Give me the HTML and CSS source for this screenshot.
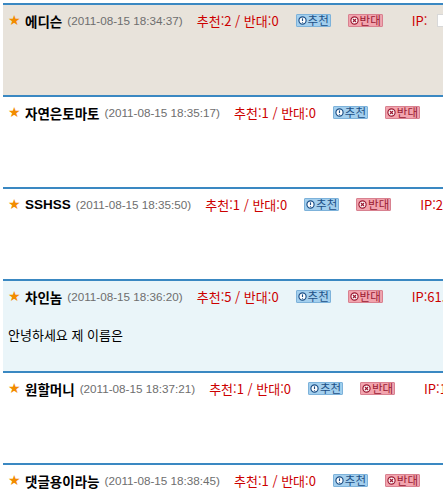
FILE: index.html
```html
<!DOCTYPE html>
<html lang="ko">
<head>
    <meta charset="utf-8">
    <title>댓글</title>
    <link rel="stylesheet" href="styles.css">
</head>
<body>
    <div class="comment-list">
        <div class="comment mine">
            <div class="comment-head">
                <span class="star">★</span>
                <span class="nick">에디슨</span>
                <span class="date">(2011-08-15 18:34:37)</span>
                <span class="votes">추천:2 / 반대:0</span>
                <span class="btn btn-up"><svg viewBox="0 0 10 10"><circle cx="5" cy="5" r="4" /><line x1="5" y1="2.6" x2="5" y2="5.6" /><line x1="5" y1="6.8" x2="5" y2="7.6" /></svg>추천</span>
                <span class="btn btn-down"><svg viewBox="0 0 10 10"><circle cx="5" cy="5" r="4" /><line x1="3.3" y1="3.3" x2="6.7" y2="6.7" /><line x1="6.7" y1="3.3" x2="3.3" y2="6.7" /></svg>반대</span>
                <span class="ip">IP: <span class="ip-box"></span></span>
            </div>
        </div>
        <div class="comment">
            <div class="comment-head">
                <span class="star">★</span>
                <span class="nick">자연은토마토</span>
                <span class="date">(2011-08-15 18:35:17)</span>
                <span class="votes">추천:1 / 반대:0</span>
                <span class="btn btn-up"><svg viewBox="0 0 10 10"><circle cx="5" cy="5" r="4" /><line x1="5" y1="2.6" x2="5" y2="5.6" /><line x1="5" y1="6.8" x2="5" y2="7.6" /></svg>추천</span>
                <span class="btn btn-down"><svg viewBox="0 0 10 10"><circle cx="5" cy="5" r="4" /><line x1="3.3" y1="3.3" x2="6.7" y2="6.7" /><line x1="6.7" y1="3.3" x2="3.3" y2="6.7" /></svg>반대</span>
                <span class="ip">IP:125.186.xxx.xxx</span>
            </div>
        </div>
        <div class="comment">
            <div class="comment-head">
                <span class="star">★</span>
                <span class="nick">SSHSS</span>
                <span class="date">(2011-08-15 18:35:50)</span>
                <span class="votes">추천:1 / 반대:0</span>
                <span class="btn btn-up"><svg viewBox="0 0 10 10"><circle cx="5" cy="5" r="4" /><line x1="5" y1="2.6" x2="5" y2="5.6" /><line x1="5" y1="6.8" x2="5" y2="7.6" /></svg>추천</span>
                <span class="btn btn-down"><svg viewBox="0 0 10 10"><circle cx="5" cy="5" r="4" /><line x1="3.3" y1="3.3" x2="6.7" y2="6.7" /><line x1="6.7" y1="3.3" x2="3.3" y2="6.7" /></svg>반대</span>
                <span class="ip">IP:211.234.xxx.xxx</span>
            </div>
        </div>
        <div class="comment reply">
            <div class="comment-head">
                <span class="star">★</span>
                <span class="nick">차인놈</span>
                <span class="date">(2011-08-15 18:36:20)</span>
                <span class="votes">추천:5 / 반대:0</span>
                <span class="btn btn-up"><svg viewBox="0 0 10 10"><circle cx="5" cy="5" r="4" /><line x1="5" y1="2.6" x2="5" y2="5.6" /><line x1="5" y1="6.8" x2="5" y2="7.6" /></svg>추천</span>
                <span class="btn btn-down"><svg viewBox="0 0 10 10"><circle cx="5" cy="5" r="4" /><line x1="3.3" y1="3.3" x2="6.7" y2="6.7" /><line x1="6.7" y1="3.3" x2="3.3" y2="6.7" /></svg>반대</span>
                <span class="ip">IP:61.xxx.xxx.xxx</span>
            </div>
            <div class="comment-body">안녕하세요 제 이름은</div>
        </div>
        <div class="comment">
            <div class="comment-head">
                <span class="star">★</span>
                <span class="nick">원할머니</span>
                <span class="date">(2011-08-15 18:37:21)</span>
                <span class="votes">추천:1 / 반대:0</span>
                <span class="btn btn-up"><svg viewBox="0 0 10 10"><circle cx="5" cy="5" r="4" /><line x1="5" y1="2.6" x2="5" y2="5.6" /><line x1="5" y1="6.8" x2="5" y2="7.6" /></svg>추천</span>
                <span class="btn btn-down"><svg viewBox="0 0 10 10"><circle cx="5" cy="5" r="4" /><line x1="3.3" y1="3.3" x2="6.7" y2="6.7" /><line x1="6.7" y1="3.3" x2="3.3" y2="6.7" /></svg>반대</span>
                <span class="ip">IP:118.xxx.xxx.xxx</span>
            </div>
        </div>
        <div class="comment">
            <div class="comment-head">
                <span class="star">★</span>
                <span class="nick">댓글용이라능</span>
                <span class="date">(2011-08-15 18:38:45)</span>
                <span class="votes">추천:1 / 반대:0</span>
                <span class="btn btn-up"><svg viewBox="0 0 10 10"><circle cx="5" cy="5" r="4" /><line x1="5" y1="2.6" x2="5" y2="5.6" /><line x1="5" y1="6.8" x2="5" y2="7.6" /></svg>추천</span>
                <span class="btn btn-down"><svg viewBox="0 0 10 10"><circle cx="5" cy="5" r="4" /><line x1="3.3" y1="3.3" x2="6.7" y2="6.7" /><line x1="6.7" y1="3.3" x2="3.3" y2="6.7" /></svg>반대</span>
                <span class="ip">IP:175.xxx.xxx.xxx</span>
            </div>
        </div>
    </div>
</body>
</html>
```

FILE: styles.css
```css
*{
    padding: 0;
    margin: 0;
    box-sizing: border-box;
}
html{
    overflow: hidden;
}
body{
    background: #fff;
    font-family: "Liberation Sans", "Noto Sans CJK KR", sans-serif;
    font-size: 12px;
    color: #000;
}
.comment-list{
    width: 720px;
    margin: 3px 0 0 3px;
}
.comment{
    height: 92px;
    border-top: 2px solid #3a88c2;
}
.mine{
    background: #e8e3db;
}
.reply{
    background: #eaf5f9;
}
.comment-head{
    display: flex;
    align-items: center;
    height: 13px;
    margin-top: 9px;
    padding-left: 5px;
    white-space: nowrap;
}
.star{
    color: #f28c00;
    font-family: "DejaVu Sans", sans-serif;
    font-size: 14px;
    width: 17px;
    line-height: 13px;
}
.nick{
    font-family: "Liberation Sans", "Noto Sans CJK KR", sans-serif;
    font-weight: bold;
    font-size: 13.5px;
    margin-right: 5px;
}
.date{
    color: #6e6e6e;
    font-size: 11.7px;
    margin-right: 14px;
}
.votes{
    color: #cc0000;
    font-family: "Noto Sans CJK KR", sans-serif;
    font-size: 13px;
    margin-right: 17px;
}
.btn{
    display: inline-flex;
    align-items: center;
    justify-content: center;
    height: 13px;
    width: 35px;
    font-family: "Noto Sans CJK KR", sans-serif;
    font-size: 11.5px;
    line-height: 11px;
    border: 1px solid;
    border-radius: 1px;
}
.btn svg{
    width: 9px;
    height: 9px;
    margin-right: 1px;
}
.btn svg circle{
    fill: #fff;
    stroke-width: 1.3;
}
.btn svg line{
    stroke-width: 1.3;
}
.btn-up{
    background: #a3cfee;
    border-color: #7db2da;
    color: #1d4f86;
    margin-right: 17px;
}
.btn-up svg circle,
.btn-up svg line{
    stroke: #1d4f86;
}
.btn-down{
    background: #f2a4ae;
    border-color: #d88190;
    color: #9a1b33;
    margin-right: 29px;
}
.btn-down svg circle,
.btn-down svg line{
    stroke: #9a1b33;
}
.ip{
    display: inline-flex;
    align-items: center;
    color: #cc0000;
    font-family: "Noto Sans CJK KR", sans-serif;
    font-size: 13px;
}
.ip-box{
    display: inline-block;
    width: 30px;
    height: 13px;
    margin-left: 10px;
    background: #fff;
    border: 1px solid #d8d8d8;
}
.comment-body{
    margin-top: 24px;
    padding-left: 5px;
    font-family: "Noto Sans CJK KR", sans-serif;
    font-size: 13px;
    line-height: 16px;
}
```
